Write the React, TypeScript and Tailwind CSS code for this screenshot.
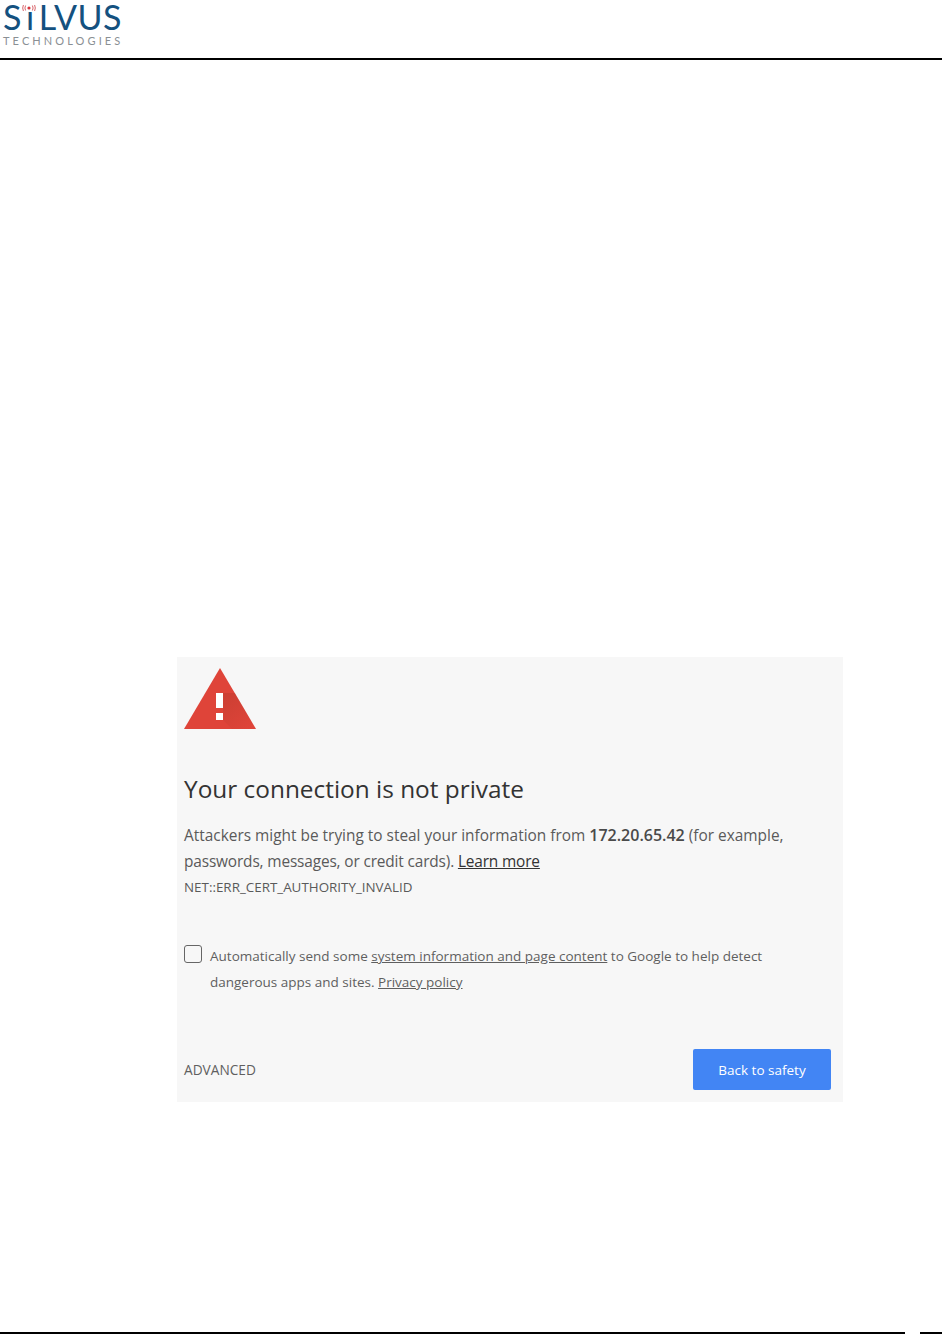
const SANS = "font-['Open_Sans','Noto_Sans',sans-serif]";

const WarningIcon = () => (
  <svg width="72" height="62" viewBox="0 0 72 62" className="block">
    <defs>
      <linearGradient id="warnShadow" x1="0.1" y1="0" x2="0.8" y2="1">
        <stop offset="0" stopColor="#b5392c" stopOpacity="0.45" />
        <stop offset="1" stopColor="#b5392c" stopOpacity="0" />
      </linearGradient>
    </defs>
    <path d="M36 0 L72 61 L0 61 Z" fill="#DF4439" />
    <path d="M39 25 L50.8 25 L72 61 L48 61 L39 52 Z" fill="url(#warnShadow)" />
    <rect x="32" y="25" width="7" height="15" fill="#fff" />
    <rect x="32" y="45" width="7" height="7" fill="#fff" />
  </svg>
);

const Logo = () => (
  <div className="flex w-[122px] flex-col pl-[3px] font-['Lato',sans-serif]">
    <div className="relative flex h-[34px] items-center text-[34px] leading-[34px] tracking-[0.6px] text-[#14517f]">
      <span>S</span>
      <span className="ml-[4px]">ı</span>
      <span className="ml-[4px]">LVUS</span>
      <svg width="14" height="8" viewBox="0 0 14 8" className="absolute left-[19px] top-[4px]">
        <circle cx="7" cy="4" r="1.6" fill="#d8343c" />
        <path d="M3.6 1.5 Q2.2 4 3.6 6.5 M10.4 1.5 Q11.8 4 10.4 6.5 M1.4 1 Q0 4 1.4 7 M12.6 1 Q14 4 12.6 7" stroke="#d8646a" strokeWidth="1" fill="none" />
      </svg>
    </div>
    <div className="text-[11px] leading-[14px] tracking-[3.1px] whitespace-nowrap text-[#8a8f94]">
      TECHNOLOGIES
    </div>
  </div>
);

const App = () => {
  return (
    <div className={`flex h-[1334px] w-[942px] flex-col overflow-hidden bg-white ${SANS}`}>
      <header className="h-[60px] shrink-0 border-b-2 border-black">
        <Logo />
      </header>

      <main className="flex-1 pt-[597px] pl-[177px]">
        <section className="flex h-[445px] w-[666px] flex-col bg-[#f7f7f7] px-[7px] pt-[11px]">
          <WarningIcon />

          <h1 className="mt-[42px] text-[24.4px] leading-[34px] whitespace-nowrap text-[#333]">
            Your connection is not private
          </h1>

          <p className="mt-[16px] w-[640px] text-[15.42px] leading-[26px] text-[#5a5a5a]">
            Attackers might be trying to steal your information from{" "}
            <b className="text-[16px] font-semibold text-[#4a4a4a]">172.20.65.42</b> (for example,{" "}
            <span className="tracking-[-0.15px]">
              passwords, messages, or credit cards). <u className="text-[#333]">Learn more</u>
            </span>
          </p>
          <p className="mt-[2px] text-[13.4px] leading-[20px] text-[#5a5a5a]">
            NET::ERR_CERT_AUTHORITY_INVALID
          </p>

          <div className="mt-[47px] flex items-start gap-[8px]">
            <span className="mt-[1px] h-[18px] w-[18px] shrink-0 rounded-[3px] border border-[#666]" />
            <p className="-mt-px w-[600px] text-[13.5px] leading-[26px] text-[#5f5f5f]">
              Automatically send some <u>system information and page content</u> to Google to help
              detect dangerous apps and sites. <u>Privacy policy</u>
            </p>
          </div>

          <div className="mt-auto mb-[12px] flex items-center justify-between pr-[5px]">
            <span className="pt-[2px] text-[13.7px] text-[#5f5f5f]">ADVANCED</span>
            <button
              type="button"
              className="h-[41px] w-[138px] rounded-[2px] bg-[#4285f4] pt-px text-[13.5px] text-white"
            >
              Back to safety
            </button>
          </div>
        </section>
      </main>

      <footer className="flex h-[2px] shrink-0 gap-[15px]">
        <div className="w-[905px] bg-black" />
        <div className="flex-1 bg-black" />
      </footer>
    </div>
  );
};

export default App;
